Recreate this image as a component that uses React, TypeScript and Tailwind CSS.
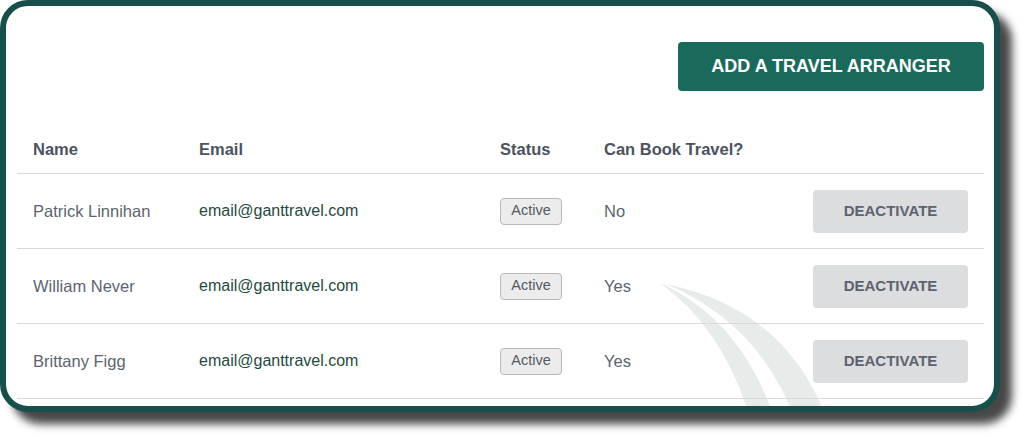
const rows = [
  { name: "Patrick Linnihan", email: "email@ganttravel.com", canBook: "No" },
  { name: "William Never", email: "email@ganttravel.com", canBook: "Yes" },
  { name: "Brittany Figg", email: "email@ganttravel.com", canBook: "Yes" },
];

export default function App() {
  return (
    <div className="h-[438px] w-[1026px] overflow-hidden bg-white font-['Liberation_Sans',Arial,sans-serif]">
      <div className="relative h-[412px] w-[1000px] overflow-hidden rounded-[28px] border-[6px] border-[#17504a] bg-white shadow-[12px_12px_9px_rgba(0,0,0,0.72)]">
        {/* faint swoosh watermark */}
        <svg className="absolute left-0 top-0" width="994" height="406" viewBox="6 6 994 406">
          <path d="M660 283 Q738 318 772 412 L748 412 Q722 328 660 283 Z" fill="#e7ebe9" />
          <path d="M666 284 Q782 308 824 412 L792 412 Q756 322 666 284 Z" fill="#e7ebe9" />
        </svg>

        <div className="relative pl-[11px] pr-[10px] pt-[36px]">
          <div className="flex justify-end">
            <button className="h-[49px] w-[306px] rounded-[4px] bg-[#1a6a5b] text-[18px] font-bold text-white">
              ADD A TRAVEL ARRANGER
            </button>
          </div>

          <div className="mt-[34px]">
            <div className="grid h-[49px] grid-cols-[166px_301px_104px_1fr] items-center border-b border-[#d9d9d9] pl-4 text-[16.5px] font-bold text-[#4b5360]">
              <div>Name</div>
              <div>Email</div>
              <div>Status</div>
              <div>Can Book Travel?</div>
            </div>
            {rows.map((r) => (
              <div
                key={r.name}
                className="grid h-[75px] grid-cols-[166px_301px_104px_1fr] items-center border-b border-[#d9d9d9] pl-4 pr-4 text-[16.5px]"
              >
                <div className="text-[#5c6470]">{r.name}</div>
                <div className="text-[16px] text-[#1f4a41]">{r.email}</div>
                <div>
                  <span className="inline-flex h-[27px] w-[62px] items-center justify-center rounded-[4px] border border-[#b8b8b8] bg-[#ececec] text-[14.5px] text-[#555b63]">
                    Active
                  </span>
                </div>
                <div className="flex items-center justify-between">
                  <span className="text-[#5c6470]">{r.canBook}</span>
                  <button className="h-[43px] w-[155px] rounded-[4px] bg-[#dcdddf] text-[15px] font-bold text-[#5b6370]">
                    DEACTIVATE
                  </button>
                </div>
              </div>
            ))}
          </div>
        </div>
      </div>
    </div>
  );
}
